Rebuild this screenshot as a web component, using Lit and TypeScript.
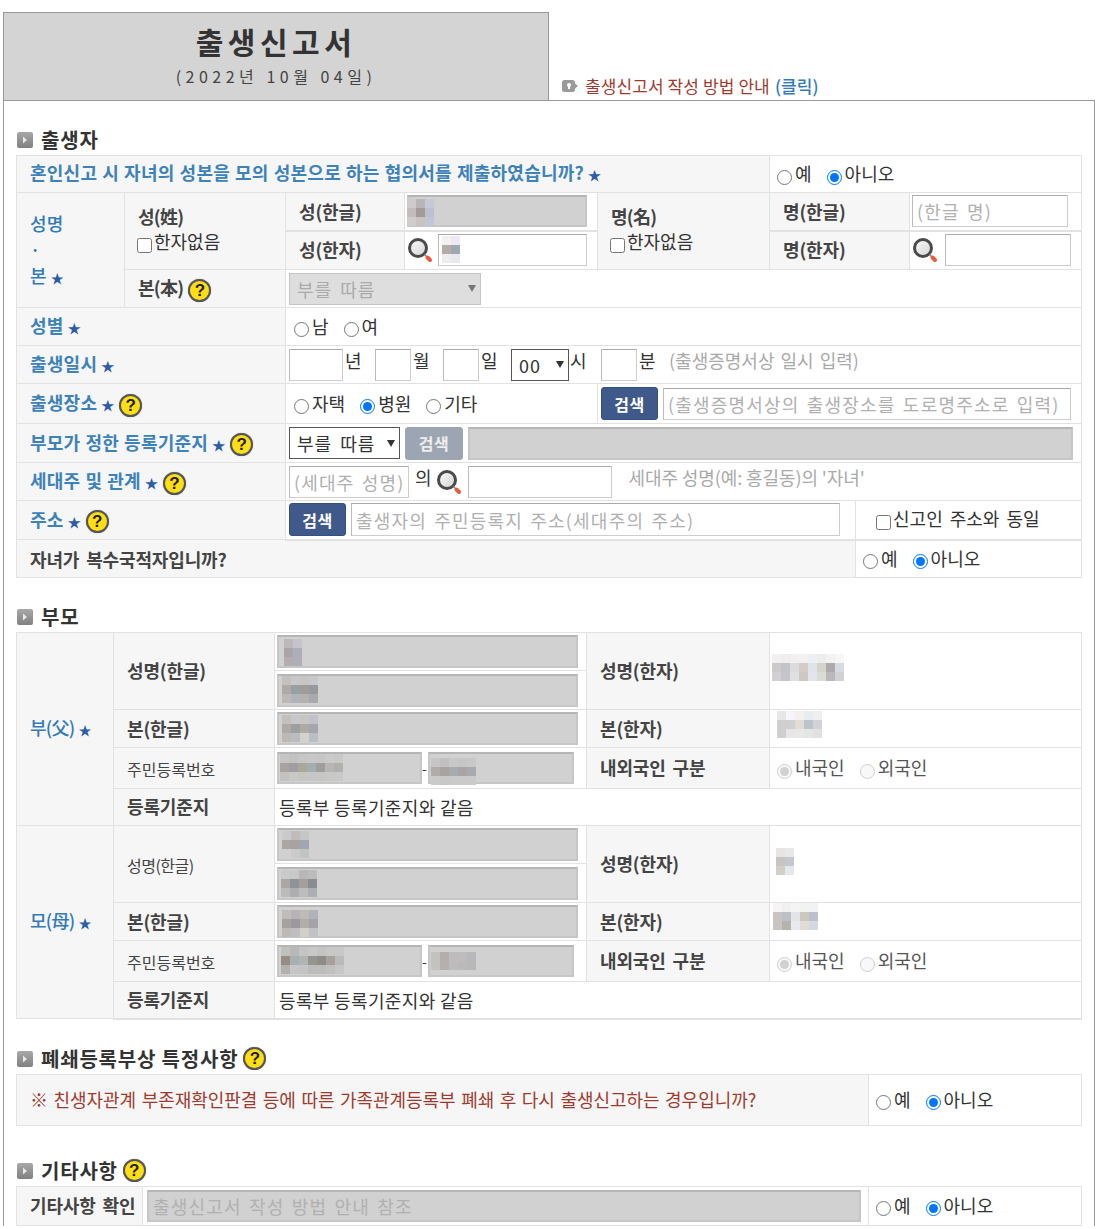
import { LitElement, html, css, svg } from "lit";
import { customElement } from "lit/decorators.js";

const star = () => html`<span class="star">★</span>`;
const help = () => html`<span class="help">?</span>`;
const mag = () => html`<svg class="mag" width="26" height="26" viewBox="0 0 26 26"><defs><linearGradient id="g" x1="0" y1="0" x2="1" y2="1"><stop offset="0" stop-color="#fafafa"/><stop offset="1" stop-color="#d4d4d4"/></linearGradient></defs><circle cx="11" cy="11" r="8.5" fill="url(#g)" stroke="#4a4a4a" stroke-width="3"/><path d="M17.5 17.5l2 2" stroke="#888" stroke-width="1.5"/><path d="M20.5 20.5l2.5 2.5" stroke="#ea5a40" stroke-width="4" stroke-linecap="round"/></svg>`;
const secIcon = () => html`<svg class="sec" width="16" height="16" viewBox="0 0 16 16"><defs><linearGradient id="s" x1="0" y1="0" x2="0" y2="1"><stop offset="0" stop-color="#a8a8a8"/><stop offset="1" stop-color="#808080"/></linearGradient></defs><rect width="16" height="16" rx="2" fill="url(#s)"/><path d="M6 4.5l4 3.5-4 3.5z" fill="#e8e8e8"/></svg>`;
const linkIcon = () => html`<svg class="li" width="16" height="14" viewBox="0 0 16 14"><rect y="1" width="13" height="12" rx="2.5" fill="#9a9a9a"/><path d="M13 4.5l3 2.5-3 2.5z" fill="#9a9a9a"/><circle cx="7" cy="6" r="2" fill="#fff"/><rect x="6" y="6" width="2" height="4" fill="#fff"/></svg>`;

const radio = (label: string, checked = false, disabled = false, group = "r") => html`<label class="opt ${disabled ? "dis" : ""}"><input type="radio" name=${group} ?checked=${checked} ?disabled=${disabled} /><span>${label}</span></label>`;
const check = (label: string) => html`<label class="opt chk"><input type="checkbox" /><span>${label}</span></label>`;
const yesNo = (g: string) => html`<div class="row gap-yn">${radio("예", false, false, g)}${radio("아니오", true, false, g)}</div>`;

const mosaic = (left: number, top: number, rows: string) => {
  const grid = rows.split("|").map((r) => r.trim().split(" "));
  const w = grid[0].length * 9;
  const h = grid.length * 9;
  return html`<svg class="mos" style="left:${left}px;top:${top}px" width=${w} height=${h} viewBox="0 0 ${w} ${h}" shape-rendering="crispEdges">${grid.map((r, y) => r.map((c, x) => svg`<rect x=${x * 9} y=${y * 9} width="9" height="9" fill="#${c}"/>`))}</svg>`;
};

@customElement("app-root")
export class AppRoot extends LitElement {
  static styles = css`
    :host { display: block; width: 1102px; height: 1229px; overflow: hidden; background: #fff; color: #333; font-family: "Noto Sans CJK KR", "Noto Sans", sans-serif; font-size: 18px; line-height: 24px; }
    * { box-sizing: border-box; }
    .head { display: flex; align-items: flex-end; padding: 12px 0 0 3px; }
    .title { width: 546px; height: 88px; background: #d4d4d4; border: 1px solid #999; border-bottom: 0; text-align: center; padding-top: 7px; }
    .title h1 { margin: 0; font-size: 30px; line-height: 42px; font-weight: 700; letter-spacing: 4.5px; color: #333; }
    .title p { margin: 2px 0 0; font-size: 16px; line-height: 24px; letter-spacing: 4.5px; color: #444; }
    .link { display: flex; align-items: center; margin: 0 0 2px 13px; font-size: 17px; color: #9e3b2e; letter-spacing: .1px; }
    .li { margin-right: 7px; }
    .link b { color: #337ab7; font-weight: 500; margin-left: 5px; }
    .main { margin-left: 3px; width: 1092px; border: 1px solid #999; border-bottom: 0; padding: 22px 12px 0; }
    .h { height: 32px; display: flex; align-items: center; font-size: 20px; font-weight: 700; letter-spacing: .8px; color: #333; padding: 2px 0 0 1px; }
    .h .sec { margin-right: 8px; }
    .h .help { margin-left: 5px; }
    .sp1 { margin-top: 22px; }
    .sp2 { margin-top: 28px; }
    table { border-collapse: collapse; table-layout: fixed; width: 1065px; }
    table.thick tr:last-child td { border-bottom-width: 2px; }
    td { border: 1px solid #e2e2e2; padding: 0 0 0 4px; vertical-align: middle; background: #fff; overflow: visible; }
    td.l { background: #f6f6f6; padding: 0 0 2px 13px; font-size: 18px; font-weight: 700; color: #444; letter-spacing: -.15px; word-spacing: 3px; }
    table.first td.l { padding-bottom: 0; }
    table.first td.l.p2 { padding-bottom: 2px; }
    td.b { color: #337ab7; font-weight: 500; letter-spacing: .2px; word-spacing: 0; }
    td.b.k { font-weight: 700; color: #3d82b8; letter-spacing: .25px; word-spacing: .7px; }
    td.l.s { font-size: 16px; font-weight: 400; letter-spacing: 0; padding-bottom: 0; padding-top: 2px; }
    td.l.ss { letter-spacing: -.5px; }
    td.tb { border-bottom-width: 2px; }
    td.plain { font-size: 18px; letter-spacing: .35px; }
    td.red { font-size: 18px; font-weight: 400; color: #9e3b2e; letter-spacing: -.05px; word-spacing: 1.6px; }
    .tight { letter-spacing: -.7px; }
    .row { display: flex; align-items: center; }
    .dot { display: block; font-size: 18px; line-height: 26px; }
    .sub { display: block; font-weight: 400; font-size: 17px; color: #444; letter-spacing: -.4px; margin-top: 1px; }
    .star { font-size: 13px; color: #2d5ca8; margin-left: 4px; letter-spacing: 0; }
    .help { display: inline-flex; width: 23px; height: 23px; border-radius: 50%; background: #ffdf14; border: 2px solid #555; color: #222; font: 700 17px/19px "Liberation Sans", sans-serif; justify-content: center; vertical-align: middle; margin-left: 5px; letter-spacing: 0; box-shadow: 0 0 1px #888; }
    .opt { display: inline-flex; align-items: center; font-size: 18px; font-weight: 400; color: #333; word-spacing: 3px; letter-spacing: 0; margin-bottom: 2px; }
    .opt input { margin: 8px 3px 0 0; width: 15px; height: 15px; flex: none; accent-color: #0075ff; }
    .opt.chk input { margin-left: -1px; margin-right: 2px; }
    .opt.dis { color: #555; }
    .gap-yn { gap: 15px; padding-left: 3px; }
    .gap15 { gap: 15px; }
    .gap-dis { gap: 15px; }
    .f { position: relative; flex: none; height: 32px; }
    .f input { display: block; width: 100%; height: 100%; padding: 0 4px; margin: 0; border: 1px solid #cdcdcd; border-top-color: #aaa; border-left-color: #bbb; outline: 0; font: 18px "Noto Sans CJK KR", sans-serif; letter-spacing: 1.2px; word-spacing: 2px; color: #333; background: #fff; border-radius: 0; }
    .f input::placeholder { color: #b0b0b0; opacity: 1; }
    .f input.dis { background: #d1d1d1; border: 2px solid #c6c6c6; border-top-color: #b5b5b5; color: #aaa; }
    .f.flat { height: 1px; }
    .mos { position: absolute; pointer-events: none; display: block; }
    .h33 { height: 33px; }
    .mag { display: block; flex: none; margin-left: -1px; }
    select { appearance: none; font: 18px "Noto Sans CJK KR", sans-serif; height: 32px; background: #fff url("data:image/svg+xml,%3Csvg xmlns='http://www.w3.org/2000/svg' width='8' height='7'%3E%3Cpath d='M0 0h8L4 7z' fill='%23333'/%3E%3C/svg%3E") no-repeat right 4px center; border: 1px solid #555; color: #333; padding: 0 0 0 7px; border-radius: 0; outline: 0; margin: 0; letter-spacing: 1px; word-spacing: 3px; flex: none; }
    select.off { background: #dedede url("data:image/svg+xml,%3Csvg xmlns='http://www.w3.org/2000/svg' width='8' height='7'%3E%3Cpath d='M0 0h8L4 7z' fill='%23777'/%3E%3C/svg%3E") no-repeat right 4px center; border: 1px solid #c4c4c4; color: #aaa; opacity: 1; width: 192px; }
    .btn { height: 33px; width: 57px; border: 1px solid #34507f; border-radius: 3px; background: #3f5a8a; color: #fff; font: 700 16px "Noto Sans CJK KR", sans-serif; letter-spacing: .5px; padding: 0; flex: none; }
    .btn.off { background: #9da5b3; border-color: #9da5b3; color: #eee; }
    .hint { color: #a9a9a9; word-spacing: 2px; }
    .hint.nar { word-spacing: 0; letter-spacing: -.1px; margin-left: 17px; }
    .up { margin-bottom: 9px; }
    .u { margin-left: 2px; width: 30px; }
  `;

  render() {
    return html`
      <div class="head">
        <div class="title"><h1>출생신고서</h1><p>(2022년 10월 04일)</p></div>
        <div class="link">${linkIcon()}<span>출생신고서 작성 방법 안내</span><b>(클릭)</b></div>
      </div>
      <div class="main">
        <div class="h">${secIcon()}출생자</div>
        ${this.child()}
        <div class="h sp1">${secIcon()}부모</div>
        ${this.parents()}
        <div class="h sp1">${secIcon()}폐쇄등록부상 특정사항${help()}</div>
        <table>
          <colgroup><col style="width:852px" /><col style="width:213px" /></colgroup>
          <tr style="height:51px"><td class="l red">※ 친생자관계 부존재확인판결 등에 따른 가족관계등록부 폐쇄 후 다시 출생신고하는 경우입니까?</td><td>${yesNo("c")}</td></tr>
        </table>
        <div class="h sp2">${secIcon()}기타사항${help()}</div>
        <table>
          <colgroup><col style="width:126px" /><col style="width:726px" /><col style="width:213px" /></colgroup>
          <tr style="height:39px"><td class="l">기타사항 확인</td><td><div class="f" style="width:714px"><input class="dis" disabled placeholder="출생신고서 작성 방법 안내 참조" /></div></td><td>${yesNo("d")}</td></tr>
        </table>
      </div>
    `;
  }

  child() {
    const h = (n: number) => `height:${n}px`;
    return html`<table class="first">
      <colgroup>${[108, 161, 119, 193, 172, 86, 54, 172].map((w) => html`<col style="width:${w}px" />`)}</colgroup>
      <tr style=${h(37)}><td class="l b k p2" colspan="5">혼인신고 시 자녀의 성본을 모의 성본으로 하는 협의서를 제출하였습니까?${star()}</td><td colspan="3" style="padding-left:4px">${yesNo("a")}</td></tr>
      <tr style=${h(38)}>
        <td class="l b" rowspan="3"><span class="dot">성명</span><span class="dot">·</span><span class="dot">본${star()}</span></td>
        <td class="l" rowspan="2"><span class="tight">성(姓)</span><span class="sub">${check("한자없음")}</span></td>
        <td class="l tb">성(한글)</td>
        <td class="tb" style="padding-left:2px"><div class="f" style="width:180px">
          <input class="dis" disabled />${mosaic(0, 4, "cfcacc b9b4b6 c5c9d6|c2bcbd a39a9a bbbfce|d0cccc c9c4bf c2c6d6")}</div></td>
        <td class="l" rowspan="2"><span class="tight">명(名)</span><span class="sub">${check("한자없음")}</span></td>
        <td class="l tb" colspan="2">명(한글)</td>
        <td class="tb" style="padding-left:2px"><div class="f" style="width:156px"><input placeholder="(한글 명)" /></div></td>
      </tr>
      <tr style=${h(39)}>
        <td class="l p2">성(한자)</td>
        <td style="padding-left:3px"><div class="row">${mag()}<div class="f" style="width:149px;margin-left:5px"><input />${mosaic(4, 2, "f3f0ee eee8f0|b5aca8 9ea8ae|eeecee e6e8ec")}</div></div></td>
        <td class="l p2" colspan="2">명(한자)</td>
        <td style="padding-left:3px"><div class="row">${mag()}<div class="f" style="width:126px;margin-left:7px"><input /></div></div></td>
      </tr>
      <tr style=${h(38)}>
        <td class="l"><span class="tight">본(本)</span>${help()}</td>
        <td colspan="6" style="padding-left:3px"><select class="off" disabled><option>부를 따름</option></select></td>
      </tr>
      <tr style=${h(38)}><td class="l b k" colspan="2">성별${star()}</td><td colspan="6" style="padding-left:8px"><div class="row gap15">${radio("남", false, false, "g")}${radio("여", false, false, "g")}</div></td></tr>
      <tr style=${h(38)}><td class="l b k" colspan="2">출생일시${star()}</td><td colspan="6" style="padding-left:3px"><div class="row">
        <div class="f" style="width:54px"><input /></div><span class="u up">년</span>
        <div class="f" style="width:36px"><input /></div><span class="u up">월</span>
        <div class="f" style="width:36px"><input /></div><span class="u up">일</span>
        <select style="width:58px"><option>00</option></select><span class="u up" style="margin-left:1px;width:31px">시</span>
        <div class="f" style="width:36px"><input /></div><span class="u up">분</span>
        <span class="hint up">(출생증명서상 일시 입력)</span>
      </div></td></tr>
      <tr style=${h(40)}><td class="l b k" colspan="2">출생장소${star()}${help()}</td>
        <td colspan="2" style="padding-left:8px"><div class="row gap15">${radio("자택", false, false, "p")}${radio("병원", true, false, "p")}${radio("기타", false, false, "p")}</div></td>
        <td colspan="4" style="padding-left:3px"><div class="row"><button class="btn">검색</button><div class="f" style="width:408px;margin-left:5px"><input placeholder="(출생증명서상의 출생장소를 도로명주소로 입력)" /></div></div></td></tr>
      <tr style=${h(39)}><td class="l b k" colspan="2">부모가 정한 등록기준지${star()}${help()}</td>
        <td colspan="6" style="padding-left:3px"><div class="row"><select style="width:111px"><option>부를 따름</option></select><button class="btn off" style="width:58px;margin-left:5px">검색</button><div class="f h33" style="width:605px;margin-left:5px"><input class="dis" disabled /></div></div></td></tr>
      <tr style=${h(38)}><td class="l b k" colspan="2">세대주 및 관계${star()}${help()}</td>
        <td colspan="6" style="padding-left:3px"><div class="row">
          <div class="f" style="width:120px"><input placeholder="(세대주 성명)" /></div><span class="up" style="margin-left:6px">의</span><span style="margin-left:5px;display:flex">${mag()}</span>
          <div class="f" style="width:144px;margin-left:6px"><input /></div><span class="hint nar up">세대주 성명(예: 홍길동)의 '자녀'</span>
        </div></td></tr>
      <tr style=${h(39)}><td class="l b k" colspan="2">주소${star()}${help()}</td>
        <td colspan="4" class="tb" style="padding-left:3px"><div class="row"><button class="btn">검색</button><div class="f h33" style="width:489px;margin-left:5px"><input placeholder="출생자의 주민등록지 주소(세대주의 주소)" /></div></div></td>
        <td colspan="2" class="tb" style="padding-left:21px">${check("신고인 주소와 동일")}</td></tr>
      <tr style=${h(38)}><td class="l" colspan="6">자녀가 복수국적자입니까?</td><td colspan="2" style="padding-left:4px">${yesNo("b")}</td></tr>
    </table>`;
  }

  person(star1: string, g: string, smallName: boolean, ms: unknown[]) {
    const h = (n: number) => `height:${n}px`;
    const fw = "width:301px;height:33px";
    return html`
      <tr style=${h(38)}>
        <td class="l b" rowspan="5"><span class="tight">${star1}</span>${star()}</td>
        <td class="l ${smallName ? "s ss" : ""}" rowspan="2">성명(한글)</td>
        <td style="padding-left:2px"><div class="f" style=${fw}><input class="dis" disabled />${ms[0]}</div></td>
        <td class="l" rowspan="2">성명(한자)</td>
        <td rowspan="2"><div class="f flat">${ms[1]}</div></td>
      </tr>
      <tr style=${h(39)}><td style="padding-left:2px"><div class="f" style=${fw}><input class="dis" disabled />${ms[2]}</div></td></tr>
      <tr style=${h(38)}><td class="l">본(한글)</td><td style="padding-left:2px"><div class="f" style=${fw}><input class="dis" disabled />${ms[3]}</div></td><td class="l">본(한자)</td><td><div class="f flat">${ms[4]}</div></td></tr>
      <tr style=${h(41)}><td class="l s">주민등록번호</td><td style="padding-left:2px"><div class="row"><div class="f" style="width:145px"><input class="dis" disabled />${ms[5]}</div><span style="width:6px;font-size:14px">-</span><div class="f" style="width:146px"><input class="dis" disabled />${ms[6]}</div></div></td><td class="l">내외국인 구분</td><td style="padding-left:7px"><div class="row gap-dis">${radio("내국인", true, true, g)}${radio("외국인", false, true, g)}</div></td></tr>
      <tr style=${h(37)}><td class="l">등록기준지</td><td colspan="3" class="plain">등록부 등록기준지와 같음</td></tr>`;
  }

  parents() {
    return html`<table class="thick">
      <colgroup>${[97, 161, 312, 183, 312].map((w) => html`<col style="width:${w}px" />`)}</colgroup>
      ${this.person("부(父)", "m1", false, [
        mosaic(7, 4, "bdb9ba c4c4ca|aaa4a6 aeaeb8|b4acaf b0afb8"),
        mosaic(-2, -17, "f2f0f0 eeeeee f2f0ee f2f0f0 ecf0f4 eeecec f2f2f4 f6f6f6|cccaca c4c4c8 dcdcdc d6ccc6 dde4ea d4d4ce aeaaac d8dce0|d2d0d2 c6c6ca e0e0e2 cfc8c2 e2e6ec dcdcd6 bbb8ba d2d2d4"),
        mosaic(5, 2, "c4c0be c8c8cc c8c6c4 c8c8ca|aeaaa6 98a0a4 a09c98 969a9a|bcb8b6 b0b4b8 b4b2ac a8aaae"),
        mosaic(5, 3, "c4c0be c8c8cc c8c6c4 c0c2c8|aeaaa6 9ea09e aeaaa4 a4a6ac|bcb8b6 bcbcc0 d4d2cc bcbec6"),
        mosaic(3, -17, "e8e6e6 f6f6f8 f4f0ee e8ecee f0eeee|d0ced0 d0d0d2 e2dcd6 bcc6ca d4d2d6|d0cece e8e6e6 e8e8e8 e4e6e6 e2e0e0"),
        mosaic(3, 2, "c8c6c4 c2c2c2 c6c6c6 c8c8c8 c6c6c4 cacaca c8c8c8|aaa4a0 a09ea2 aaa89a a4aeb2 a09e9c b8b6b2 b0b0ac|c4c2c0 c8c8c4 c6c6c0 c4c6c8 c6c6c4 c8c8c6 c8c8c8"),
        mosaic(3, 6, "c6c4c4 c0c0c0 c8c8c8 c6c6c6 c8c8c8|b0acac a8a2a0 a8aaae a8a4a4 a8aaae|cacaca c8c8c8 cacaca cacaca cacaca"),
      ])}
      ${this.person("모(母)", "m2", true, [
        mosaic(5, 3, "cacaca c0bcba c4c8c8|aaa6a2 a8a2a0 a0a6ae|d0d0d0 cacaca c2c4c4"),
        mosaic(2, -16, "e8e4e2 e8e8ea|c8c4c2 c4c8cc|d2cec8 e4e8ec"),
        mosaic(4, 3, "cacaca c8c8c8 b8b6b6 bcbcbc|aaa6a2 8f9298 a49e9c 8a8c92|bcbaba aeaeb0 bcbcbc acaeb2"),
        mosaic(5, 5, "c0bcba b6b2b6 bebab4 b0b4ba|a6a2a0 9c989e b0aea6 a4a4a8|bcb8b6 c0bebc d0d0c8 c0c2c8"),
        mosaic(-1, -18, "f6f4f4 f0f0f0 f4f4f4 f2f2f0 f0f2f4|c8c4c4 bcc0c8 e2e4e8 cec8bc bcc0cc|c8c4c2 b8b2ac e8eaee e2dcd4 d4d8e0"),
        mosaic(4, 2, "c2c0bc b8b8b8 c4c4c4 c8c8c8 c4c4c4 c8c8c8 c8c8c8|968c86 aab0b0 b0b4b2 96948e 8e8c88 a8a09a bababa|b4b0ac c6c6c8 c4c4c4 bcbcba bcbcba c0c0be c6c6c6"),
        mosaic(3, 7, "c4c2c0 b4aeaa bcbcbe bebcbc b8b8ba|c4c2c0 b4b0ac bcbcbe bcbab8 b8b8ba"),
      ])}
    </table>`;
  }
}
